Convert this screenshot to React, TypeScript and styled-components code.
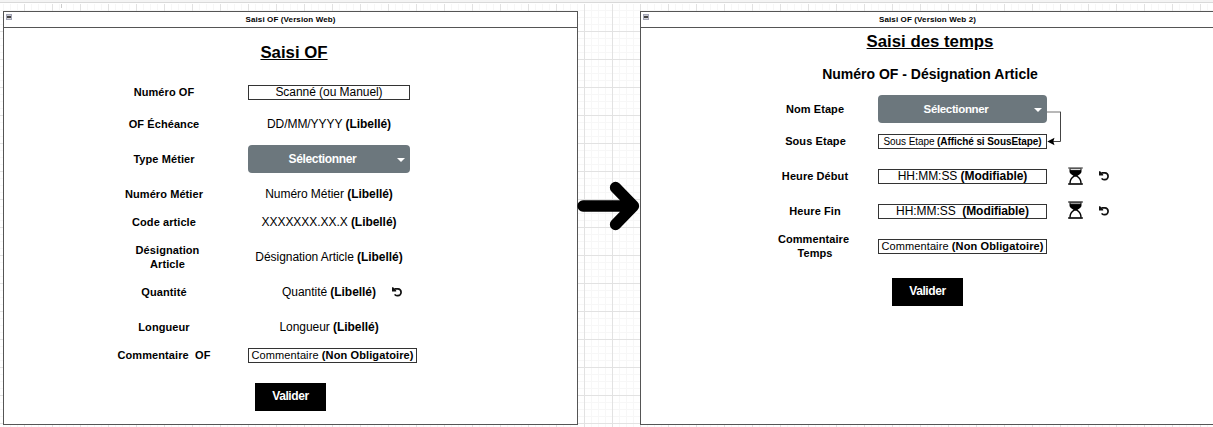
import React from "react";
import styled, { createGlobalStyle } from "styled-components";

const GlobalStyle = createGlobalStyle`
  * { box-sizing: border-box; }
  html, body { margin: 0; padding: 0; overflow: hidden; }
  body { background: #fff; color: #000; font-family: "Liberation Sans", Arial, sans-serif; }
`;

const Canvas = styled.main`
  width: 1213px;
  height: 427px;
  overflow: hidden;
  display: flex;
  flex-direction: column;
  background-color: #fff;
  background-image:
    linear-gradient(to right, #e2e2e2 1px, transparent 1px),
    linear-gradient(to bottom, #e2e2e2 1px, transparent 1px),
    linear-gradient(to right, #f7f7f7 1px, transparent 1px),
    linear-gradient(to bottom, #f7f7f7 1px, transparent 1px);
  background-size: 28px 28px, 28px 28px, 7px 7px, 7px 7px;
  background-position: 24px 3px, 24px 3px, 3px 3px, 3px 3px;
`;

const TopEdge = styled.div`
  flex: none;
  height: 4px;
  background: linear-gradient(#f4f4f4 0 2px, #d9d9d9 2px 3px, #fff 3px 4px);
`;

const PageMark = styled.div<{ $left: number }>`
  flex: none;
  height: 4px;
  width: 1px;
  margin: 0 0 3px ${(p) => p.$left}px;
  background: #ccc;
`;

const Board = styled.div`
  display: flex;
  align-items: flex-start;
  padding-left: 3px;
`;

const Panel = styled.section`
  flex: none;
  width: 575px;
  height: 414px;
  background: #fff;
  border: 1px solid #555;
`;

const PanelHeader = styled.header`
  display: grid;
  grid-template-columns: 12px 1fr 12px;
  height: 16px;
  border-bottom: 1px solid #555;
  font-size: 8px;
  font-weight: bold;
  letter-spacing: 0.12px;
  line-height: 15px;
  text-align: center;
  white-space: nowrap;
`;

const Collapse = styled.span`
  width: 6px;
  height: 6px;
  margin: 2px 0 0 2px;
  border: 1px solid #a3a5b5;
  background: linear-gradient(#c9c9d2 0 1px, #444 1px 3px, #d5d5dc 3px 4px);
`;

const Title = styled.h1<{ $top: number; $center: number }>`
  width: ${(p) => p.$center * 2}px;
  margin: ${(p) => p.$top}px 0 0;
  font-size: 16.8px;
  line-height: 20px;
  text-align: center;
  text-decoration: underline;
`;

const Subtitle = styled.h2<{ $center: number }>`
  width: ${(p) => p.$center * 2}px;
  margin: 12px 0 0;
  font-size: 14px;
  line-height: 20px;
  text-align: center;
`;

const Form = styled.div<{ $top: number; $left: number }>`
  padding: ${(p) => p.$top}px 0 0 ${(p) => p.$left}px;
`;

const Row = styled.div<{ $gap?: number; $value: number }>`
  display: grid;
  grid-template-columns: 120px ${(p) => p.$value}px auto;
  column-gap: ${(p) => (p.$value === 162 ? 24 : 5)}px;
  align-items: center;
  height: 28px;
  margin-top: ${(p) => p.$gap ?? 7}px;
  white-space: nowrap;
`;

const Label = styled.label<{ $indent?: number }>`
  padding-left: ${(p) => p.$indent ?? 0}px;
  font-size: 11px;
  font-weight: bold;
  letter-spacing: 0.08px;
  line-height: 14px;
  text-align: center;
`;

const LabelTail = styled.span`
  padding-left: 3px;
`;

const Value = styled.span<{ $size?: number; $spacing?: number }>`
  font-size: ${(p) => p.$size ?? 12}px;
  letter-spacing: ${(p) => p.$spacing ?? -0.05}px;
  line-height: 14px;
  text-align: center;
  white-space: pre;
`;

const Field = styled(Value)<{ $width: number }>`
  width: ${(p) => p.$width}px;
  height: 15px;
  border: 1px solid #333;
  line-height: 13px;
`;

const Select = styled.div<{ $size: number }>`
  display: grid;
  grid-template-columns: 1fr 8px;
  align-items: center;
  height: 28px;
  padding: 0 5px 1px 0;
  border-radius: 4px;
  background: #6c777d;
  color: #fff;
  font-size: ${(p) => p.$size}px;
  font-weight: bold;
  letter-spacing: -0.35px;
  text-align: center;
`;

const Caret = styled.i`
  width: 0;
  height: 0;
  margin-top: 2px;
  border: 4px solid transparent;
  border-top: 4px solid #fff;
  border-bottom: 0;
`;

const Submit = styled.button<{ $top: number; $left: number }>`
  display: block;
  width: 71px;
  height: 28px;
  margin: ${(p) => p.$top}px 0 0 ${(p) => p.$left}px;
  padding: 0 0 2px;
  border: 0;
  background: #000;
  color: #fff;
  font: bold 12px "Liberation Sans", Arial, sans-serif;
  letter-spacing: -0.4px;
`;

const Actions = styled.span<{ $left: number }>`
  display: flex;
  align-items: center;
  gap: 16px;
  margin-left: ${(p) => p.$left}px;
`;

const Gap = styled.div`
  flex: none;
  width: 62px;
  padding-top: 171px;
`;

const Drawing = styled.svg`
  display: block;
  flex: none;
  overflow: visible;
`;

const Lifted = styled.span<{ $by: number }>`
  display: block;
  margin-bottom: ${(p) => p.$by * 2}px;
`;

const ConnectorSlot = styled.div`
  position: relative;
  height: 28px;
  svg { position: absolute; left: -5px; top: 16px; }
`;

const Undo = () => (
  <Drawing width="10" height="10" viewBox="0 0 10 10">
    <path d="M2.4 1.9 H6 A3 3.3 0 0 1 6 8.7 H5 C4 8.7 3.3 8.4 2.7 7.4" fill="none" stroke="#111" strokeWidth="1.7" />
    <path d="M0 0.3 H1.2 L4.2 3.4 V4.6 H0 Z" fill="#111" />
  </Drawing>
);

const Hourglass = ({ full }: { full?: boolean }) => (
  <Drawing width="15" height="18" viewBox="0 0 15 18">
    <path d="M0.2 1 H14.8" stroke={full ? "#222" : "#555"} strokeWidth="1.3" />
    <path d="M1.5 1.6 H13.5 V4.5 C13.5 6.4 11.8 7.4 9.5 8.8 V9.8 H5.5 V8.8 C3.2 7.4 1.5 6.4 1.5 4.5 Z" fill="#000" />
    <path d="M2.5 2.5 H12.5" stroke={full ? "#999" : "#ddd"} strokeWidth="1.2" />
    <path d="M6.2 9.2 C3.2 10.9 2 12.3 2 16.5 M8.8 9.2 C11.8 10.9 13 12.3 13 16.5" fill="none" stroke="#000" strokeWidth="1.4" />
    <path d="M0.2 17 H14.8" stroke="#000" strokeWidth="1.6" />
  </Drawing>
);

const Connector = () => (
  <Drawing width="16" height="36" viewBox="0 0 16 36">
    <path d="M0 1 H14" fill="none" stroke="#888" strokeWidth="1.2" />
    <path d="M13.5 1 V30.5 H5" fill="none" stroke="#444" strokeWidth="1" />
    <path d="M0.3 30.5 L7.5 26.8 L6.3 30.5 L7.5 34.2 Z" fill="#000" />
  </Drawing>
);

const labelRows = [
  { label: "Numéro Métier", value: "Numéro Métier", gap: 7 },
  { label: "Code article", value: "XXXXXXX.XX.X", gap: 0 },
  { label: <>Désignation<br />Article</>, value: "Désignation Article", gap: 7, indent: 7 },
  { label: "Quantité", value: "Quantité", gap: 7, undo: true },
  { label: "Longueur", value: "Longueur", gap: 7 },
];

const OrderPanel = () => (
  <Panel>
    <PanelHeader><Collapse /><span>Saisi OF (Version Web)</span></PanelHeader>
    <Title $top={15} $center={290}>Saisi OF</Title>
    <Form $top={15} $left={100}>
      <Row $value={162} $gap={0}>
        <Label>Numéro OF</Label>
        <Field $width={162}>Scanné (ou Manuel)</Field>
      </Row>
      <Row $value={162} $gap={4}>
        <Label>OF Échéance</Label>
        <Value>DD/MM/YYYY <b>(Libellé)</b></Value>
      </Row>
      <Row $value={162}>
        <Label>Type Métier</Label>
        <Select $size={12}><span>Sélectionner</span><Caret /></Select>
      </Row>
      {labelRows.map((r) => (
        <Row key={r.value} $value={162} $gap={r.gap}>
          <Label $indent={r.indent}>{r.label}</Label>
          <Value>{r.value} <b>(Libellé)</b></Value>
          {r.undo && <Actions $left={-42}><Undo /></Actions>}
        </Row>
      ))}
      <Row $value={162} $gap={0}>
        <Label>Commentaire&nbsp; OF</Label>
        <Field $width={169} $size={11} $spacing={0.11}>Commentaire <b>(Non Obligatoire)</b></Field>
      </Row>
      <Submit $top={14} $left={151}>Valider</Submit>
    </Form>
  </Panel>
);

const TimePanel = () => (
  <Panel>
    <PanelHeader><Collapse /><span>Saisi OF (Version Web 2)</span></PanelHeader>
    <Title $top={4} $center={289}>Saisi des temps</Title>
    <Subtitle $center={289}>Numéro OF - Désignation Article</Subtitle>
    <Form $top={11} $left={112}>
      <Row $value={169} $gap={0}>
        <Label $indent={4}>Nom Etape</Label>
        <Select $size={11.5}><span>Sélectionner</span><Caret /></Select>
        <ConnectorSlot><Connector /></ConnectorSlot>
      </Row>
      <Row $value={169} $gap={4}>
        <Label $indent={5}>Sous Etape</Label>
        <Field $width={169} $size={10} $spacing={-0.08}>Sous Etape <b>(Affiché si SousEtape)</b></Field>
      </Row>
      <Row $value={169}>
        <Label $indent={4}>Heure Début</Label>
        <Field $width={169}>HH:MM:SS <b>(Modifiable)</b></Field>
        <Actions $left={16}><Hourglass /><Undo /></Actions>
      </Row>
      <Row $value={169}>
        <Label $indent={4}>Heure Fin</Label>
        <Field $width={169}>{"HH:MM:SS  "}<b>(Modifiable)</b></Field>
        <Actions $left={16}><Lifted $by={1}><Hourglass full /></Lifted><Undo /></Actions>
      </Row>
      <Row $value={169}>
        <Label $indent={1}>Commentaire<br /><LabelTail>Temps</LabelTail></Label>
        <Field $width={169} $size={11} $spacing={0.11}>Commentaire <b>(Non Obligatoire)</b></Field>
      </Row>
      <Submit $top={18} $left={139}>Valider</Submit>
    </Form>
  </Panel>
);

export default function App() {
  return (
    <>
      <GlobalStyle />
      <Canvas>
        <TopEdge />
        <PageMark $left={61} />
        <Board>
          <OrderPanel />
          <Gap>
            <Drawing width="62" height="48" viewBox="0 0 62 48">
              <path d="M5 24 H55 M37.5 5.5 L55.5 24 L37.5 42.5" fill="none" stroke="#000" strokeWidth="11.3" strokeLinecap="round" strokeLinejoin="round" />
            </Drawing>
          </Gap>
          <TimePanel />
        </Board>
      </Canvas>
    </>
  );
}
